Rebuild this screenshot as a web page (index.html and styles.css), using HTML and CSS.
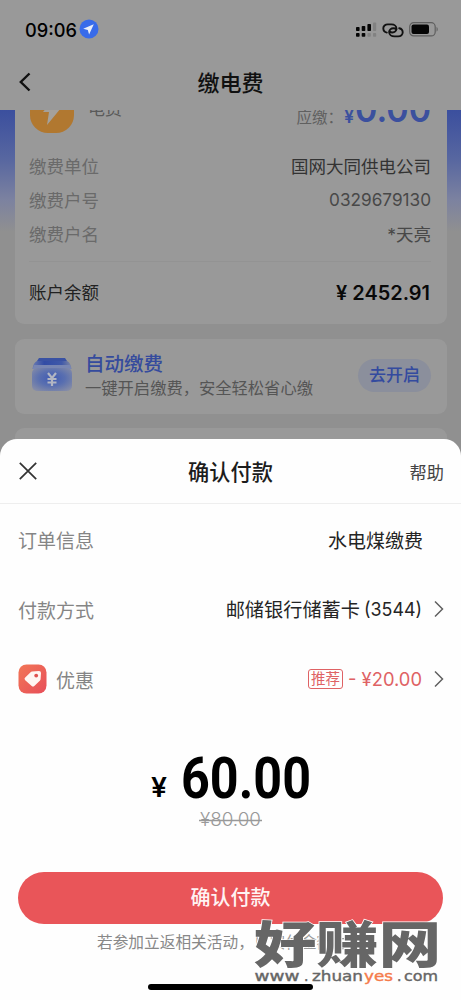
FILE: index.html
```html
<!DOCTYPE html>
<html lang="zh-CN">
<head>
<meta charset="utf-8">
<title>缴电费</title>
<link rel="stylesheet" href="styles.css">
</head>
<body>
<div class="phone">
  <header class="top">
    <div class="status">
      <div class="clock"><svg width="53" height="24"><text x="0" y="18.500" textLength="52" lengthAdjust="spacingAndGlyphs">09:06</text></svg>
        <svg width="20" height="20" viewBox="0 0 20 20"><circle cx="10" cy="10" r="9.5" fill="#386bea"/><path d="M14.8 5.3 4.2 9.8l4.6 1.2 1.3 4.5z" fill="#e8edf9"/></svg>
      </div>
      <div class="indicators">
        <svg width="21" height="16" viewBox="0 0 21 16"><g fill="#050505"><rect x="0" y="5" width="3.6" height="4" rx=".8"/><rect x="5.7" y="4" width="3.6" height="5" rx=".8"/><rect x="11.4" y="2" width="3.6" height="7" rx=".8"/><rect x="0" y="11" width="3.6" height="3.7" rx=".8"/><rect x="5.7" y="11" width="3.6" height="3.7" rx=".8"/></g><g fill="#828282"><rect x="17" y="0.5" width="3.2" height="8.5" rx=".8"/><rect x="11.4" y="11" width="3.4" height="3.7" rx=".8"/><rect x="17" y="11" width="3.2" height="3.7" rx=".8"/></g></svg>
        <svg class="link" width="22" height="15" viewBox="0 0 22 15" fill="none" stroke="#111" stroke-width="1.9" stroke-linecap="round"><path d="M4.800 9.600C2.600 9.200 1.300 7.400 1.300 5.300 1.300 3 3.200 1.400 5.800 1.400h3.700c3 0 4.900 1.900 4.900 4.100s-1.700 4-4 4c-1.300 0-2.200-.4-2.800-1"/><path d="M17.200 5.200c2.200.4 3.500 2.100 3.500 4.100 0 2.400-1.900 4.100-4.500 4.100h-3.700c-3 0-5.300-1.800-5.300-4.200 0-2.300 1.800-4 4.200-4 1.400 0 2.400.4 3 1.100"/></svg>
        <svg width="30" height="15" viewBox="0 0 30 15"><rect x=".7" y=".7" width="25.5" height="13.2" rx="4" fill="none" stroke="#5e5e5e" stroke-width="1.2"/><rect x="2.5" y="2.5" width="17.5" height="9.6" rx="2" fill="#050505"/><path d="M27.5 5v4.6c1.8-.6 1.8-4 0-4.6z" fill="#666"/></svg>
      </div>
    </div>
    <div class="nav">
      <svg width="12" height="20" viewBox="0 0 12 20"><path d="M10.5 1.5 1.8 10l8.7 8.5" fill="none" stroke="#111" stroke-width="2.4"/></svg>
      <h1>缴电费</h1>
    </div>
  </header>
  <main class="page">
    <section class="card bill">
      <div class="summary">
        <svg class="bolt" width="44" height="45" viewBox="0 0 44 45"><rect width="44" height="45" rx="18" fill="#b17830"/><path d="M27 7 13 24h6l-2 13 14-17h-6z" fill="#a5a19b"/></svg>
        <span class="kind">电费</span>
        <span class="due">应缴：</span>
        <svg class="amount" width="88" height="46"><text x="0" y="37" font-size="18">¥</text><text x="11" y="36" font-size="36" textLength="76" lengthAdjust="spacingAndGlyphs">0.00</text></svg>
      </div>
      <div class="row"><span>缴费单位</span><b class="company">国网大同供电公司</b></div>
      <div class="row"><span>缴费户号</span><b class="number">0329679130</b></div>
      <div class="row"><span>缴费户名</span><b>*天亮</b></div>
      <div class="balance"><span>账户余额</span><svg width="96" height="24"><text x="1" y="20" textLength="94" lengthAdjust="spacingAndGlyphs">¥ 2452.91</text></svg></div>
    </section>
    <section class="card auto">
      <svg class="wallet" width="42" height="35" viewBox="0 0 42 35"><defs><radialGradient id="w" cx=".5" cy=".45" r=".65"><stop offset="0" stop-color="#405bb3"/><stop offset=".5" stop-color="#596fb0"/><stop offset="1" stop-color="#858ca7"/></radialGradient><linearGradient id="t" x1="0" x2="1"><stop stop-color="#6b7bb0"/><stop offset=".3" stop-color="#324ca5"/><stop offset=".75" stop-color="#4059a9"/><stop offset="1" stop-color="#8088a4"/></linearGradient></defs><path d="M8 1h26l2 3H6z" fill="#3a52a3"/><path d="M6 4h30q4 2 4.500 8h-39Q2 6 6 4z" fill="url(#t)"/><path d="M3 8h36l1.500 4h-39z" fill="#7886b3"/><rect x="1" y="11" width="40" height="23" rx="5" fill="url(#w)"/><path d="m17 16 4 5 4-5M16.500 22h9M16.500 25.500h9M21 21v8" fill="none" stroke="#b2b6c2" stroke-width="2.2"/></svg>
      <div class="copy"><h2>自动缴费</h2><p>一键开启缴费，安全轻松省心缴</p></div>
      <div class="enable">去开启</div>
    </section>
    <section class="card next"></section>
  </main>
  <section class="sheet">
    <div class="sheet-head">
      <svg width="18" height="18" viewBox="0 0 18 18"><path d="m.8.8 16.400 16.400m0-16.400L.8 17.200" fill="none" stroke="#333" stroke-width="1.7"/></svg>
      <h2>确认付款</h2><span>帮助</span>
    </div>
    <div class="line"><span>订单信息</span><b>水电煤缴费</b></div>
    <div class="line"><span>付款方式</span><b class="bank">邮储银行储蓄卡<svg width="60" height="28"><text x="1" y="21" textLength="58" lengthAdjust="spacingAndGlyphs">(3544)</text></svg></b><svg class="chev" width="10" height="18" viewBox="0 0 10 18"><path d="m1 1.500 7.500 7.500L1 16.500"/></svg></div>
    <div class="line"><svg class="tag" width="29" height="30" viewBox="0 0 29 30"><defs><linearGradient id="r" y2="1"><stop stop-color="#f27656"/><stop offset="1" stop-color="#e74e59"/></linearGradient></defs><rect x=".5" y=".5" width="28" height="29" rx="8" fill="url(#r)"/><path d="M14 7.500 21 7q2 0 2 2l-.4 6q-.1 1-.8 1.700l-5.500 5.300q-1.300 1.200-2.600 0l-6.500-5.700q-1.500-1.400 0-2.700l5.400-5.400q.6-.6 1.400-.7z" fill="#fff6f2"/><circle cx="18.200" cy="11.600" r="1.900" fill="#df514f"/></svg><span>优惠</span><b class="discount"><i>推荐</i><svg width="75" height="28"><text x="0" y="21" textLength="74" lengthAdjust="spacingAndGlyphs">- ¥20.00</text></svg></b><svg class="chev" width="10" height="18" viewBox="0 0 10 18"><path d="m1 1.500 7.500 7.500L1 16.500"/></svg></div>
    <div class="price"><svg width="461" height="86"><text class="yen" x="151" y="49" textLength="16" lengthAdjust="spacingAndGlyphs">¥</text><text class="total" x="181" y="49.500" textLength="130" lengthAdjust="spacingAndGlyphs">60.00</text><text class="old" x="200" y="78" textLength="61" lengthAdjust="spacingAndGlyphs">¥80.00</text><path d="M199 72.500h63" stroke="#999" stroke-width="1.300"/></svg></div>
    <div class="pay">确认付款</div>
    <p class="note">若参加立返相关活动，<span>以实付金额为准</span></p>
    <div class="home"></div>
  </section>
  <svg class="watermark" width="200" height="80" viewBox="0 0 200 80">
    <text class="mark" x="4" y="52.500" textLength="187" lengthAdjust="spacingAndGlyphs">好赚网</text>
    <g class="url"><text x="4.500" y="71" textLength="45" lengthAdjust="spacingAndGlyphs">www</text><text x="54" y="71">.</text><text x="62" y="71" textLength="51" lengthAdjust="spacingAndGlyphs">zhuan</text><text x="114" y="71" textLength="29" lengthAdjust="spacingAndGlyphs" class="orange">yes</text><text x="147" y="71">.</text><text x="154" y="71" textLength="34" lengthAdjust="spacingAndGlyphs">com</text></g>
  </svg>
</div>
</body>
</html>
```
FILE: styles.css
```css
* { box-sizing: border-box; }
body { margin: 0; font-family: Inter, "Noto Sans CJK SC", sans-serif; }
h1, h2, p { margin: 0; }
b, i { font-weight: 400; font-style: normal; }
svg { display: block; flex: none; }
.phone { position: relative; width: 461px; height: 1000px; overflow: hidden; background: #909090; display: flex; flex-direction: column; }
.top { height: 110px; flex: none; background: #999; position: relative; z-index: 1; }
.status { height: 56px; padding: 18px 22px 0 25px; display: flex; justify-content: space-between; }
.clock { display: flex; gap: 1px; font-size: 19px; font-weight: 500; }
.clock svg:last-child { margin-top: 1px; }
.indicators { display: flex; padding-top: 4px; align-items: flex-start; }
.link { margin: 1px 5px 0 5px; }
.nav { height: 54px; display: grid; grid-template-columns: 100px 1fr 100px; align-items: center; }
.nav svg { margin: -2px 0 0 19px; }
.nav h1 { text-align: center; font-size: 22px; line-height: 30px; font-weight: 500; color: #111; }
.page { height: 340px; padding: 0 14px 0 15px; background: linear-gradient(#3b4f9e 0, #5867a0 50px, #7c82a0 90px, #909090 122px); }
.card { background: #999; border-radius: 9px; }
.bill { height: 214px; padding: 0 16px 0 14px; border-radius: 0 0 9px 9px; }
.summary { height: 38px; display: flex; align-items: flex-start; }
.bolt { margin: -22px 0 0 1px; }
.kind { margin: -13px 0 0 14px; font-size: 17px; line-height: 25px; color: #5a5a5a; }
.due { margin: -6px -8px 0 auto; font-size: 15.5px; line-height: 28px; color: #606060; }
.amount { margin: -24px -1px 0 9px; fill: #3b509e; font-weight: 600; }
.row { height: 34px; display: flex; justify-content: space-between; align-items: center; font-size: 17.5px; color: #6a6a6a; }
.row b { color: #484848; }
.row .company { color: #333; }
.row .number { font-size: 17.2px; }
.balance { height: 62px; margin-top: 11px; border-top: 1px solid #939393; display: flex; align-items: center; justify-content: space-between; font-size: 17.5px; padding-bottom: 2px; color: #222; }
.balance svg { font-size: 19.5px; font-weight: 600; fill: #090909; }
.auto { height: 75px; margin-top: 15px; display: flex; align-items: center; padding: 0 16px; }
.wallet { margin-top: -5px; }
.copy { margin: -2px 0 0 12px; flex: 1; white-space: nowrap; }
.copy h2 { font-size: 19.5px; line-height: 25px; font-weight: 500; color: #354b9d; }
.copy p { font-size: 16.3px; line-height: 23px; color: #555; }
.enable { width: 73px; height: 33px; margin-top: -2px; border-radius: 17px; background: #8b8f9c; color: #344b9f; font-size: 17px; font-weight: 500; line-height: 32px; text-align: center; }
.next { height: 24px; margin-top: 14px; }
.sheet { position: absolute; left: 0; right: 0; bottom: 0; height: 561px; background: #fefefe; border-radius: 17px 17px 0 0; }
.sheet-head { height: 65px; border-bottom: 1px solid #eee; display: grid; grid-template-columns: 100px 1fr 100px; align-items: center; }
.sheet-head svg { margin-left: 19px; }
.sheet-head h2 { text-align: center; font-size: 21.2px; line-height: 30px; margin-top: 1px; font-weight: 500; color: #1c1c1c; }
.sheet-head span { text-align: right; padding-right: 17px; font-size: 17.2px; color: #444; }
.line { height: 70px; padding: 0 17px 0 18px; display: flex; align-items: center; font-size: 19px; color: #858585; }
.line > b { margin-left: auto; color: #252525; margin-right: 21px; }
.line .bank { display: flex; align-items: center; font-size: 19.2px; margin-right: 11px; }
.bank svg { margin-left: 3px; fill: #252525; }
.chev { fill: none; stroke: #606060; stroke-width: 1.5; }
.tag { margin-right: 9px; }
.line .discount { display: flex; align-items: center; margin-right: 11px; }
.discount svg { fill: #df6264; margin-left: 5px; }
.discount i { width: 35px; height: 20px; border: 1px solid #df6264; border-radius: 3px; color: #df6264; font-size: 14.5px; line-height: 17px; text-align: center; }
.price { height: 86px; margin-top: 34px; }
.yen { font-size: 27px; font-weight: 600; }
.total { font: 700 57px Roboto, sans-serif; }
.old { font-size: 18px; fill: #999; font-weight: 300; }
.pay { height: 52px; margin: 38px 18px 0; border-radius: 26px; background: #e95559; color: #fff3f3; font-size: 20px; font-weight: 500; line-height: 52px; text-align: center; }
.note { height: 36px; padding-left: 97px; font-size: 15.7px; line-height: 37px; color: #888; white-space: nowrap; }
.note span { color: #999; }
.home { width: 165px; height: 6px; border-radius: 3px; background: #000; margin: 24px auto 0; }
.watermark { position: absolute; left: 250px; top: 910px; }
.mark { font: 900 50px "Noto Sans CJK SC", sans-serif; fill: #666; stroke: #fff; stroke-width: 1.4px; paint-order: stroke; }
.url { font: 400 14px "DejaVu Sans", sans-serif; fill: #666; stroke: #666; stroke-width: .4px; }
.orange { fill: #f57b4b; stroke: #f57b4b; }
```
